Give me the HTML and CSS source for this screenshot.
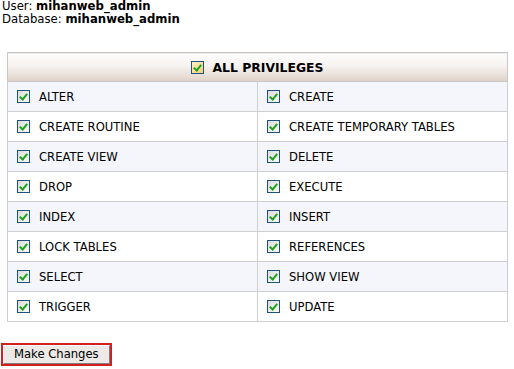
FILE: index.html
```html
<!DOCTYPE html>
<html lang="en">
<head>
    <meta charset="UTF-8">
    <title>Privileges</title>
    <link rel="stylesheet" href="styles.css">
</head>
<body>
    <div class="info">
        <div>User: <b>mihanweb_admin</b></div>
        <div>Database: <b>mihanweb_admin</b></div>
    </div>

    <table class="privs">
        <tr class="head">
            <th colspan="2"><span class="cb"></span>ALL PRIVILEGES</th>
        </tr>
        <tr class="odd">
            <td><span class="cb"></span>ALTER</td>
            <td><span class="cb"></span>CREATE</td>
        </tr>
        <tr>
            <td><span class="cb"></span>CREATE ROUTINE</td>
            <td><span class="cb"></span>CREATE TEMPORARY TABLES</td>
        </tr>
        <tr class="odd">
            <td><span class="cb"></span>CREATE VIEW</td>
            <td><span class="cb"></span>DELETE</td>
        </tr>
        <tr>
            <td><span class="cb"></span>DROP</td>
            <td><span class="cb"></span>EXECUTE</td>
        </tr>
        <tr class="odd">
            <td><span class="cb"></span>INDEX</td>
            <td><span class="cb"></span>INSERT</td>
        </tr>
        <tr>
            <td><span class="cb"></span>LOCK TABLES</td>
            <td><span class="cb"></span>REFERENCES</td>
        </tr>
        <tr class="odd">
            <td><span class="cb"></span>SELECT</td>
            <td><span class="cb"></span>SHOW VIEW</td>
        </tr>
        <tr>
            <td><span class="cb"></span>TRIGGER</td>
            <td><span class="cb"></span>UPDATE</td>
        </tr>
    </table>

    <div class="actions">
        <span class="btn-wrap"><button class="btn">Make Changes</button></span>
    </div>
</body>
</html>
```

FILE: styles.css
```css
body {
    margin: 0;
    padding: 0 2px;
    font-family: 'DejaVu Sans', Verdana, sans-serif;
    font-size: 11.7px;
    color: #000;
    background: #fff;
}
.info {
    line-height: 13px;
}
.info b {
    font-weight: bold;
}
.privs {
    margin: 26px 0 0 5px;
    width: 501px;
    border-collapse: collapse;
    border: 1px solid #c9c9c9;
}
.privs th {
    height: 28px;
    padding: 0;
    text-align: center;
    font-size: 12.4px;
    font-weight: bold;
    background: linear-gradient(#fefefe 0%, #f6f2ef 45%, #e6dbd3 85%, #ddd0c6 100%);
    border-bottom: 1px solid #c9c9c9;
}
.privs th .cb {
    margin-right: 8px;
    background: linear-gradient(135deg, #fbf2c8, #f2cf74);
}
.privs td {
    width: 50%;
    height: 29px;
    padding: 0 0 0 9px;
    border: 1px solid #cfcfcf;
    font-size: 11.6px;
    white-space: nowrap;
}
.privs tr.odd td {
    background: #f5f6fb;
}
.cb {
    display: inline-block;
    vertical-align: -2px;
    width: 11px;
    height: 11px;
    margin-right: 9px;
    border: 1px solid #1c5180;
    background: linear-gradient(135deg, #dcdcd7, #fbfbf9);
    position: relative;
}
.cb::after {
    content: "";
    position: absolute;
    left: 3px;
    top: 1px;
    width: 3px;
    height: 6px;
    border: solid #21a121;
    border-width: 0 2px 2px 0;
    transform: rotate(40deg);
}
.actions {
    margin-top: 21px;
}
.btn-wrap {
    display: inline-block;
    margin-left: -1px;
    border: 2px solid #d21f1f;
}
.btn {
    display: block;
    margin: 0;
    padding: 0 10px;
    height: 19px;
    font-family: 'DejaVu Sans', Verdana, sans-serif;
    font-size: 11.6px;
    line-height: 17px;
    color: #000;
    background: #ece9e6;
    border: 1px solid;
    border-color: #fff #808080 #808080 #fff;
}
```
